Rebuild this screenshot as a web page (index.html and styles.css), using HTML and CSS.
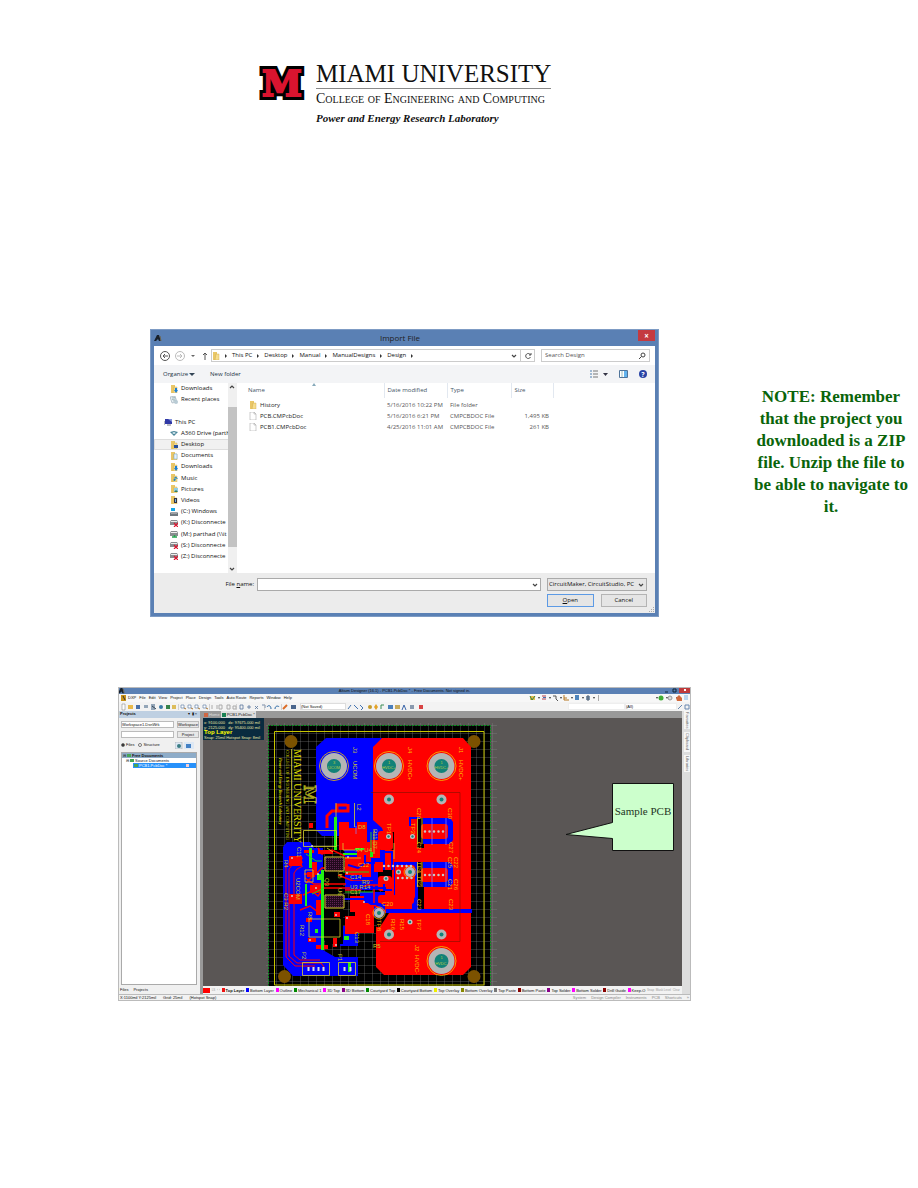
FILE: index.html
```html
<!DOCTYPE html>
<html lang="en">
<head>
<meta charset="utf-8">
<title>Power and Energy Research Laboratory</title>
<link rel="stylesheet" href="styles.css">
</head>
<body>
<svg class="defs" aria-hidden="true">
  <symbol id="folder" viewBox="0 0 8 8"><path d="M1 0h4v8H1z" fill="#e9c768"/><path d="M4 2h3v6H3z" fill="#f6dd8e" stroke="#c9a23f" stroke-width=".4"/></symbol>
  <symbol id="down" viewBox="0 0 8 8"><use href="#folder"/><path d="M5 3h2v2h1L6 8 4 5h1z" fill="#1b7fd6"/></symbol>
  <symbol id="desk" viewBox="0 0 8 8"><use href="#folder"/><path d="M4 4h4v3H4z" fill="#264f9c"/></symbol>
  <symbol id="docs" viewBox="0 0 8 8"><use href="#folder"/><path d="M4 2h3v5H4z" fill="#e5f1fb" stroke="#69a5cf" stroke-width=".5"/></symbol>
  <symbol id="music" viewBox="0 0 8 8"><use href="#folder"/><path d="M5 6V3l2 1v1" fill="none" stroke="#167fc4"/><circle cx="4.500" cy="6" r="1" fill="#167fc4"/></symbol>
  <symbol id="pics" viewBox="0 0 8 8"><use href="#folder"/><path d="M4 3h4v4H4z" fill="#91cce5"/><path d="M4 7l2-2 2 2z" fill="#397b55"/></symbol>
  <symbol id="video" viewBox="0 0 8 8"><use href="#folder"/><path d="M4 2h3v5H4z" fill="#334"/><path d="M5 3h1v3H5z" fill="#6ab1df"/></symbol>
  <symbol id="recent" viewBox="0 0 8 8"><path d="M0 1l5-1 2 6-5 1z" fill="#e4edf3" stroke="#8094a3" stroke-width=".5"/><path d="M2 2l3-.5M2 3.500L5.500 3M3 5l3-.5" stroke="#688"  stroke-width=".5"/><circle cx="6" cy="6" r="2" fill="#b9cbd5"/></symbol>
  <symbol id="pc" viewBox="0 0 8 8"><path d="M1 1h7v5H1z" fill="#3038a6"/><path d="M4 1h4v3z" fill="#8393da"/><path d="M3 7h4M0 3v4" stroke="#778"/></symbol>
  <symbol id="cloud" viewBox="0 0 8 8"><path d="M0 3l4-1 4 1-4 4z" fill="#4a8599"/><path d="M2 4l2-1 2 1-2 1z" fill="#e4f3f8"/></symbol>
  <symbol id="cdrive" viewBox="0 0 8 8"><path d="M1 0h2v2H1zm2 0h2v2H3zM1 2h4v1H1z" fill="#13a7e6"/><path d="M0 5l1-1h6l1 1v3H0z" fill="#707980"/><path d="M1 5h6" stroke="#ccc"/></symbol>
  <symbol id="drive" viewBox="0 0 8 8"><path d="M0 3l1-2h6l1 2v3H0z" fill="#898d90"/><path d="M1 2h6v1H1z" fill="#eee"/></symbol>
  <symbol id="lost" viewBox="0 0 8 8"><use href="#drive"/><path d="M4 4l4 4M8 4L4 8" stroke="#dc1730" stroke-width="1.200"/></symbol>
  <symbol id="net" viewBox="0 0 8 8"><use href="#drive"/><path d="M2 7h5M4.500 5v2" stroke="#24a44e" stroke-width="1.500"/></symbol>
  <symbol id="file" viewBox="0 0 8 8"><path d="M1 0h4l2 2v6H1z" fill="#fff" stroke="#999" stroke-width=".5"/><path d="M5 0v2h2" fill="none" stroke="#999" stroke-width=".5"/></symbol>
  <symbol id="chev" viewBox="0 0 8 8"><path d="M2 3l2 2 2-2" fill="none" stroke="#444" stroke-width="1.200"/></symbol>
  <symbol id="tri" viewBox="0 0 8 8"><path d="M1 3h6L4 6z" fill="#345"/></symbol>
  <symbol id="right" viewBox="0 0 8 8"><path d="M3 2l2 2-2 2z" fill="#333"/></symbol>
  <symbol id="altium" viewBox="0 0 8 8"><path d="M3 1h2l2 6H5L4 5 2 7H0z" fill="#18202b"/><path d="M6 2l1 5" stroke="#6c6550"/></symbol>
</svg>

<header class="brand">
  <svg class="mark" viewBox="0 0 46 38" role="img" aria-label="Miami M"><text x="23" y="31" text-anchor="middle" class="mark-m mark-edge">M</text><text x="23" y="31" text-anchor="middle" class="mark-m" aria-hidden="true">M</text></svg>
  <div class="brand-text">
    <h1>MIAMI UNIVERSITY</h1>
    <p class="college">College of Engineering and Computing</p>
    <p class="lab">Power and Energy Research Laboratory</p>
  </div>
</header>

<main>
<section class="import-row">
  <div class="dialog">
    <div class="titlebar"><svg class="ic"><use href="#altium"/></svg><span>Import File</span><button class="close" aria-label="Close">×</button></div>
    <div class="address">
      <svg class="nav" viewBox="0 0 52 14"><g fill="none" stroke="#555"><circle cx="6" cy="7" r="4.500"/><path d="M9 7H4m2-2L4 7l2 2"/><g stroke="#bbb"><circle cx="21" cy="7" r="4.500"/><path d="M18 7h5m-2-2l2 2-2 2"/></g><path d="M46 11V4m-2 2l2-2 2 2"/></g><path d="M32 6h4l-2 2z" fill="#666"/></svg>
      <div class="path"><svg class="ic"><use href="#folder"/></svg><svg class="sep"><use href="#right"/></svg><span>This PC</span><svg class="sep"><use href="#right"/></svg><span>Desktop</span><svg class="sep"><use href="#right"/></svg><span>Manual</span><svg class="sep"><use href="#right"/></svg><span>ManualDesigns</span><svg class="sep"><use href="#right"/></svg><span>Design</span><svg class="sep"><use href="#right"/></svg><svg class="ic end"><use href="#chev"/></svg><button class="refresh" aria-label="Refresh"><svg class="ic" viewBox="0 0 8 8"><path d="M6.500 3A2.500 2.500 0 1 0 6.500 5M7 1v2H5" fill="none" stroke="#555"/></svg></button></div>
      <div class="search"><input aria-label="Search Design" placeholder="Search Design"><svg class="ic" viewBox="0 0 8 8"><circle cx="5" cy="3" r="2" fill="none" stroke="#444"/><path d="M3.500 4.500L1 7" stroke="#444"/></svg></div>
    </div>
    <div class="tools"><button>Organize <svg class="ic"><use href="#tri"/></svg></button><button>New folder</button>
      <svg class="views" viewBox="0 0 60 12"><path d="M1 3h2M1 6h2M1 9h2" stroke="#4b7cae"/><path d="M4 3h5M4 6h5M4 9h5" stroke="#777"/><path d="M14 5h5l-2.500 3z" fill="#334"/><path d="M30.500 2.500h8v7h-8z" fill="#fff" stroke="#50749a"/><path d="M35 3h3v6h-3z" fill="#62b3ee"/><path d="M33 3v6" stroke="#9bb"/><circle cx="54" cy="6" r="4" fill="#2944a6"/><text x="54" y="9" text-anchor="middle" class="help">?</text></svg>
    </div>
    <div class="browser">
      <ul class="tree">
        <li><svg class="ic"><use href="#down"/></svg>Downloads</li><li><svg class="ic"><use href="#recent"/></svg>Recent places</li><li></li>
        <li class="root"><svg class="ic"><use href="#pc"/></svg>This PC</li>
        <li><svg class="ic"><use href="#cloud"/></svg>A360 Drive (parth</li>
        <li class="sel"><svg class="ic"><use href="#desk"/></svg>Desktop</li>
        <li><svg class="ic"><use href="#docs"/></svg>Documents</li><li><svg class="ic"><use href="#down"/></svg>Downloads</li>
        <li><svg class="ic"><use href="#music"/></svg>Music</li><li><svg class="ic"><use href="#pics"/></svg>Pictures</li><li><svg class="ic"><use href="#video"/></svg>Videos</li>
        <li><svg class="ic"><use href="#cdrive"/></svg>(C:) Windows</li><li><svg class="ic"><use href="#lost"/></svg>(K:) Disconnecte</li><li><svg class="ic"><use href="#net"/></svg>(M:) parthad (\\it</li><li><svg class="ic"><use href="#lost"/></svg>(S:) Disconnecte</li><li><svg class="ic"><use href="#lost"/></svg>(Z:) Disconnecte</li>
      </ul>
      <div class="scroll"><svg class="ic flip"><use href="#chev"/></svg><i></i><svg class="ic"><use href="#chev"/></svg></div>
      <div class="files">
      <table>
        <thead><tr><th class="c-name">Name<svg class="sort" viewBox="0 0 4 3"><path d="M0 3l2-3 2 3z" fill="#8ab"/></svg></th><th class="c-date">Date modified</th><th class="c-type">Type</th><th class="c-size">Size</th><th></th></tr></thead>
        <tbody>
          <tr><td><svg class="ic"><use href="#folder"/></svg>History</td><td>5/16/2016 10:22 PM</td><td>File folder</td><td></td><td></td></tr>
          <tr><td><svg class="ic"><use href="#file"/></svg>PCB.CMPcbDoc</td><td>5/16/2016 6:21 PM</td><td>CMPCBDOC File</td><td>1,495 KB</td><td></td></tr>
          <tr><td><svg class="ic"><use href="#file"/></svg>PCB1.CMPcbDoc</td><td>4/25/2016 11:01 AM</td><td>CMPCBDOC File</td><td>261 KB</td><td></td></tr>
        </tbody>
      </table>
      </div>
    </div>
    <div class="foot">
      <label for="fname">File <u>n</u>ame:</label>
      <div class="combo"><input id="fname"><svg class="ic"><use href="#chev"/></svg></div>
      <div class="actions">
        <div class="pick"><select aria-label="File type"><option>CircuitMaker, CircuitStudio, PC</option></select><svg class="ic"><use href="#chev"/></svg></div>
        <button class="open"><u>O</u>pen</button><button>Cancel</button>
      </div>
      <svg class="grip" viewBox="0 0 6 6"><path d="M4 0h1v1H4zM2 2h1v1H2zm2 0h1v1H4zM0 4h1v1H0zm2 0h1v1H2zm2 0h1v1H4z" fill="#aaa"/></svg>
    </div>
  </div>
  <p class="note">NOTE: Remember that the project you downloaded is a ZIP file. Unzip the file to be able to navigate to it.</p>
</section>

<section class="editor">
  <div class="ed-title"><svg class="ic"><use href="#altium"/></svg><span>Altium Designer (16.1) - PCB1.PcbDoc * - Free Documents. Not signed in.</span><svg class="winbtns" viewBox="0 0 28 7"><path d="M2 5h3M10 2h3v3h-3z" stroke="#123" fill="none"/><path d="M16 0h12v6H16z" fill="#c03a3c"/><path d="M21 2l2 2m0-2l-2 2" stroke="#fff"/></svg></div>
  <div class="menubar">
    <nav><svg class="dxp" viewBox="0 0 6 6"><path d="M0 0h5v6H0z" fill="#c89218"/><path d="M2 1l2 4" stroke="#333"/></svg><a href="#">DXP</a><a href="#">File</a><a href="#">Edit</a><a href="#">View</a><a href="#">Project</a><a href="#">Place</a><a href="#">Design</a><a href="#">Tools</a><a href="#">Auto Route</a><a href="#">Reports</a><a href="#">Window</a><a href="#">Help</a></nav>
    <svg class="strip-menu" viewBox="528 0 163 8"><path d="M530 2h5v4h-5z" fill="#e2bb4d"/><path d="M530 2l2 4 3-4" stroke="#338244" fill="none"/><path d="M542 2h4M542 5h4" stroke="#b5404a"/><path d="M543 3.500h3" stroke="#4a70b0"/><path d="M553 2h3v3l2 2" stroke="#555" fill="none"/><path d="M564 1v5h5M564 4h3" stroke="#b57620" fill="none"/><path d="M575 1h4v5h-4z" fill="#4f85bd"/><path d="M586 2h4v4h-4z" fill="#8196ae"/><path d="M588 1v6" stroke="#456"/><path d="M538 3h2l-1 2zm11 0h2l-1 2zm11 0h2l-1 2zm11 0h2l-1 2zm11 0h2l-1 2zm11 0h2l-1 2zm63 0h2l-1 2zm10 0h2l-1 2zm10 0h2l-1 2z" fill="#333"/><path d="M598.500 1v6" stroke="#aaa"/><circle cx="661" cy="4" r="2.500" fill="#40ad35"/><circle cx="670" cy="4" r="2" fill="#ddd" stroke="#999"/><path d="M676 4l3-3 3 3v3h-5z" fill="#d36a3c"/><path d="M684 1h4v5h-4z" fill="#b9d4ef"/></svg>
  </div>
  <div class="toolbar">
    <svg class="strip-a" viewBox="120 0 180 8"><path d="M122 1h3v6h-3z" fill="#fff" stroke="#777" stroke-width=".5"/><path d="M128 2h5v4h-5z" fill="#e8b94a"/><path d="M136 2h4v4h-4z" fill="#476fa8"/><path d="M144 2h4v3h-4zM151 1h4v6h-4z" fill="#94a6b8"/><path d="M152 3l4 3" stroke="#345"/><circle cx="161" cy="4" r="2" fill="#397aa8"/><path d="M166 2h4v4h-4z" fill="#36834a"/><path d="M172 2h4v4h-4z" fill="#ddbd5b"/><path d="M181 2h3v3h-3zm7 0h3v3h-3zm7 0h3v3h-3zm8 0h3v3h-3z" fill="#fff" stroke="#52739e" stroke-width=".6"/><path d="M184 5l2 1m5-1l2 1m5-1l2 1m6-1l2 1" stroke="#a77430"/><path d="M212 2v4m5-4v4m2-4h3v4h-3zm8 0h3v4h-3zm6 1h3v3h-3z" stroke="#aaa" fill="none"/><path d="M240 2h3v4h-3zm7 2h4m-2-2v4m6-3l3 3m0-3l-3 3m7-4h3v3" stroke="#58759c" fill="none" stroke-width=".8"/><path d="M267 4c1-2 4-2 4 2m4 0c0-4 4-3 4-2" stroke="#2867a4" fill="none"/><path d="M283 6l4-4" stroke="#dc6c26" stroke-width="2"/><path d="M291 2h5v4h-5z" fill="#49658c"/><path d="M178.500 1v6m31-6v6m27-6v6m28-6v6m17-6v6" stroke="#bbb" stroke-width=".6"/></svg>
    <select aria-label="Saved view"><option>(Not Saved)</option></select>
    <svg class="strip-b" viewBox="346 0 82 8"><path d="M348 6l3-4m3 0l4 4m2-4l3 3-2 2" stroke="#4373b0" fill="none"/><circle cx="370" cy="4" r="2" fill="#c59b2d"/><path d="M376 1l2 3-2 3-2-3z" fill="#e3a227"/><path d="M381 6V2h3" stroke="#3b8c55" fill="none"/><path d="M388 2h5v4h-5z" fill="#4a7ebb"/><path d="M395 2h5v4h-5z" fill="#c7a95b"/><path d="M402 7l2-5 2 5" stroke="#3b65a9" fill="none"/><path d="M410 2h4v4h-4z" fill="#8999ae"/><path d="M419 2h4v4h-4z" fill="#d84444"/></svg>
    <select class="blank" aria-label="Filter"><option></option></select><select class="blank" aria-label="Scope"><option>(All)</option></select>
    <svg class="strip-c" viewBox="0 0 14 8"><path d="M1 6l4-4m3 0h4v4H8z" stroke="#6888b0" fill="none"/></svg>
  </div>
  <div class="workspace">
    <aside class="projects">
      <div class="p-head"><b>Projects</b><span>▾ ▮ ×</span></div>
      <div class="p-form">
        <select aria-label="Workspace"><option>Workspace1.DsnWrk</option></select><button>Workspace</button>
        <input aria-label="Project"><button>Project</button>
      </div>
      <div class="p-mode"><label><input type="radio" name="m" checked>Files</label><label><input type="radio" name="m">Structure</label><svg class="p-icons" viewBox="0 0 22 7"><path d="M0 0h7v7H0z" fill="#dde8f4" stroke="#999" stroke-width=".5"/><circle cx="4" cy="4" r="2" fill="#3b7d83"/><path d="M9 0h10v7H9z" fill="#dde8f4"/><path d="M11 2h5v4h-5z" fill="#4581c4"/></svg></div>
      <ul class="p-tree"><li class="g">⊟ <i></i><b>Free Documents</b></li><li class="s">⊟ <i></i>Source Documents</li><li class="d"><i></i>PCB1.PcbDoc *<em></em></li></ul>
      <div class="p-tabs"><span>Files</span><span>Projects</span></div>
    </aside>
    <div class="stage">
      <div class="doc-tabs"><span class="home"><i></i>Home</span><span class="doc"><i></i>PCB1.PcbDoc *</span></div>
      <svg class="pcb" viewBox="203 718 479 268" preserveAspectRatio="xMinYMin slice" role="img" aria-label="Printed circuit board layout">
        <defs>
          <pattern id="grid" x="268" y="725" width="8" height="8" patternUnits="userSpaceOnUse"><path d="M0 .5h8M.5 0v8" stroke="#8a8a8a" stroke-opacity=".5" stroke-width=".6"/></pattern>
          <pattern id="mesh" width="2" height="2" patternUnits="userSpaceOnUse"><path d="M0 0h2v2H0z" fill="#220a1d"/><path d="M0 0h1v1H0z" fill="#602455"/></pattern>
          <g id="pad"><circle r="14.500" fill="none" stroke="#f5c400" stroke-width=".8"/><circle r="13" fill="#b5b5b5"/><circle r="7" fill="#128278"/></g>
          <g id="via"><circle r="5" fill="#b5b5b5"/><circle r="2" fill="#128278"/></g>
          <g id="pt"><circle r="2.500" fill="#c4c4c4"/><circle r="1.200" fill="#128278"/></g>
        </defs>
        <path d="M203 718h479v268H203z" fill="#5a5655"/>
        <path d="M266 723h231v263H266z" fill="url(#grid)"/>
        <path d="M268 725h222v262H268z" fill="#000"/><path d="M268 725h222v262H268z" fill="url(#grid)"/>
        <path d="M268.500 987V725.500H490.500V987" fill="none" stroke="#0b8b20" stroke-dasharray="2 1"/>
        <path d="M274.500 985V731.500H484V985z" fill="none" stroke="#c6c500"/>
        <g fill="#7c5200"><circle cx="291" cy="741.500" r="6.500"/><circle cx="474" cy="741.500" r="6.500"/><circle cx="284.500" cy="976.500" r="6.500"/><circle cx="474" cy="976.500" r="6.500"/></g>
        <g fill="#00f">
          <path d="M316 747l10-9h60v98h-64l-6-6z"/>
          <path d="M283 847l4-5h23l4 6h9v102l12 7h23v19h-65l-10-11z"/>
          <path d="M340 836h60v48h-55v-30z"/>
          <path d="M345 868h45v22h-45zM340 926h18v20h-18zM360 892h30v24h-30z"/>
        </g>
        <path d="M373 747l9-9h81l8 9v220l-8 8h-79l-8-8v-40l9-14v-77l-3-8-9-8z" fill="#f00"/>
        <g fill="#000"><path d="M417 818h7v30h-7zM417 862h7v50h-7zM380 832h14v18h-14zM378 870h14v16h-14z"/><path d="M323 860h20v84h-17l-3-8z"/><path d="M376 927l9-14h4l-9 14z"/></g>
        <g fill="#00f"><path d="M423 818h27l3 4v18l-3 4h-27zM423 862h27l3 4v17l-3 4h-27z"/><path d="M386 909h86v4h-86zM394 862h24v50h-6v-14h-18z"/></g>
        <g fill="#f00"><rect x="421" y="824" width="27" height="15" rx="3"/><rect x="421" y="868" width="27" height="14" rx="3"/><rect x="378" y="831" width="15" height="19" rx="3"/><rect x="395" y="865" width="20" height="34" rx="3"/><rect x="378" y="876" width="14" height="15" rx="3"/><rect x="378" y="895" width="36" height="9" rx="3"/>
          <path d="M339 822h10v6h8v-6h10v28h-28zM357 842h22v16h-22zM345 857h20v18h-20zM362 853h9v24h-9zM345 916h12v18h-12zM355 903h19v30h-19zM350 896h14v16h-14zM370 840h10v18h-10zM289 856h13v10h-13zM289 894h13v10h-13zM310 885h13v8h-13zM308 938h8v4h-8zM316 945h12v4h-12zM333 938h4v9h-4zM309 823h4v5h-4zM304 850h10v3h-10zM318 850h15v4h-15zM312 862h5v13h-5zM316 900h5v15h-5zM307 872h8v5h-8zM334 912h6v5h-6zM374 862h9v10h-9zM306 918h6v4h-6z"/>
        </g>
        <g fill="none" stroke="#f00"><path d="M327 828v-12l5-5h16v-7M337 811v-6h10" stroke-width="3"/><path d="M303 858l-12 3-5 6v90l9 9h20M303 862l-10 2-4 5v87l8 7h24l3 4M303 866l-6 3-3 4v82l6 5h20"/><path d="M304 874h12l6-6h24M305 878l9 6h32M303 895l9-4 6 5 6-8h30M300 910l10-4 8 6h5M345 890h14l8-5h14M318 848l4 6 10-4 13 6M306 883l8-8M338 875l15 6h20M374 885v20l10 6" stroke-width="1.500"/></g>
        <g fill="none" stroke="#00f"><path d="M344 899h20l7 5h10M347 882h28M350 888h36M365 855v8h10M348 865l10 3 6-4M380 852h12v18M410 826v-8h10M392 890h-8v-6" stroke-width="2"/><path d="M356 826v8M432 818v27M446 818v27M432 862v25M446 862v25" stroke="#88f" stroke-width=".7"/></g>
        <path d="M325 857h19v14h-19zM325 895h19v13h-19z" fill="url(#mesh)" stroke="#d8cc32"/>
        <g fill="#22ef16"><path d="M334 817h3v33h-3zM321 870h3v80h-3zM309 848h3v20h-3zM305 884h2v22h-2zM348 962h3v10h-3zM315 929h3v4h-3zM344 936h5v4h-5zM317 874h4v6h-4zM343 853h14v2h-14zM355 848h9v2h-9zM370 852h3v5h-3z"/><path d="M306 854l10 7h6M324 888l-12 6M343 872h26M345 892h28M371 832v24" fill="none" stroke="#22cf16"/></g>
        <g fill="none" stroke="#d9d22f" stroke-width=".8"><path d="M303.500 830.500h33v16h-33zM309 919h31v18h-31zM302.500 962.500h27v13h-27zM338.500 962.500h17v13h-17z"/><path d="M291.500 749v89M354.500 803v24M336 803v14M417.500 818v26M422 818v26M417.500 862v25M422 862v25M394 843v16M343 843v7h12M327 848l6 4M345 858h16M374 830v24M305 870h8v12h-8z"/></g>
        <path d="M371 792.500h89v149h-80" fill="none" stroke="#801000" stroke-width=".6"/>
        <use href="#pad" x="334" y="766"/><use href="#pad" x="389" y="766"/><use href="#pad" x="441.500" y="766"/><use href="#pad" x="441.500" y="961"/>
        <use href="#via" x="389" y="799.500"/><use href="#via" x="441.500" y="799.500"/><use href="#via" x="389" y="934.500"/><use href="#via" x="441.500" y="934.500"/><use href="#via" x="379" y="913"/><use href="#via" x="410" y="872"/>
        <use href="#pt" x="388.500" y="836.500"/><use href="#pt" x="412.500" y="836.500"/><use href="#pt" x="398.500" y="872"/><use href="#pt" x="386" y="878.500"/><use href="#pt" x="410" y="922"/>
        <g fill="none" stroke="#f5b400" stroke-width=".8"><circle cx="379" cy="913" r="6"/><circle cx="410" cy="872" r="6"/></g>
        <g fill="none" stroke="#c8c8c8" stroke-width="2.500" stroke-linecap="round" stroke-dasharray="0 4.500"><path d="M425 831.500h20M425 875h20M384 866h30M398 878h14"/></g>
        <g fill="none" stroke="#ddd" stroke-width="2"><path d="M308.500 967v4M313.500 967v4M318.500 967v4M323.500 967v4M344.500 967v4M350.500 967v4"/></g>
        <g fill="#ccc"><circle cx="292" cy="858" r="1"/><circle cx="292" cy="896" r="1"/><circle cx="318" cy="874" r="1"/><circle cx="347" cy="873" r="1"/><circle cx="348" cy="857" r="1"/><circle cx="364" cy="902" r="1"/><circle cx="347" cy="918" r="1"/><circle cx="336" cy="915" r="1"/><circle cx="310" cy="940" r="1"/><circle cx="336" cy="945" r="1"/><circle cx="312" cy="846" r="1"/><circle cx="316" cy="888" r="1"/></g>
        <g class="silk">
          <text class="m1" transform="translate(294 749) rotate(90)">MIAMI UNIVERSITY</text><text class="m2" transform="translate(286 750) rotate(90)">College of Engineering and Computing</text><text class="m3" transform="translate(279 758) rotate(90)">Power and Energy Research Laboratory</text><text class="m4" transform="translate(304 785) rotate(90)">M</text>
          <text transform="translate(353 747) rotate(90)">J3</text><text transform="translate(353 761) rotate(90)">UCOM</text><text transform="translate(357 804) rotate(90)">L2</text><text x="358" y="829">D8</text>
          <g class="orange"><text transform="translate(408 747) rotate(90)">J4</text><text transform="translate(408 760) rotate(90)">HVDC+</text><text transform="translate(459 747) rotate(90)">J1</text><text transform="translate(459 760) rotate(90)">HVDC+</text><text transform="translate(415 945) rotate(90)">J2</text><text transform="translate(415 955) rotate(90)">HVDC-</text>
          <text transform="translate(417 808) rotate(90)">C29</text><text transform="translate(448 808) rotate(90)">C30</text><text transform="translate(417 842) rotate(90)">C24</text><text transform="translate(449 842) rotate(90)">C27</text><text transform="translate(454 857) rotate(90)">C22</text><text transform="translate(448 857) rotate(90)">C25</text><text transform="translate(448 879) rotate(90)">C21</text><text transform="translate(454 879) rotate(90)">C26</text><text transform="translate(417 899) rotate(90)">C23</text><text transform="translate(449 899) rotate(90)">C23</text><text transform="translate(387 823) rotate(90)">TP1</text><text transform="translate(411 823) rotate(90)">TP2</text><text transform="translate(391 919) rotate(90)">R16</text><text transform="translate(400 919) rotate(90)">R15</text><text transform="translate(417 919) rotate(90)">TP7</text><text x="382" y="906">C20</text><text transform="translate(377 920) rotate(90)">TP8</text><text transform="translate(366 914) rotate(90)">C18</text><text transform="translate(417 862) rotate(90)">TP4</text><text transform="translate(417 876) rotate(90)">TP3</text><text x="358" y="867">C12</text></g>
          <text x="350" y="879">C14</text><text x="362" y="884">R9</text><text x="350" y="889">U3 R14</text><text x="350" y="894">C17</text><text transform="translate(296 878) rotate(90)">U2COM</text><text transform="translate(284 893) rotate(90)">C3 R2</text><text transform="translate(284 860) rotate(90)">R4</text><text transform="translate(297 847) rotate(90)">C11</text><text transform="translate(325 878) rotate(90)">Q3</text><text transform="translate(338 888) rotate(90)">U6</text><text transform="translate(338 871) rotate(90)">U5</text><text transform="translate(308 912) rotate(90)">R8</text><text transform="translate(300 925) rotate(90)">R12</text><text transform="translate(302 952) rotate(90)">P2</text><text transform="translate(338 954) rotate(90)">P1</text><text transform="translate(355 932) rotate(90)">C13</text><text x="355" y="852">R4 U4</text><text x="373" y="948">R5</text><text transform="translate(373 829) rotate(90)">R11 D7</text>
        </g>
        <g class="padtext" text-anchor="middle"><text x="334" y="764">3</text><text x="334" y="769">UCOM</text><text x="389" y="764">1</text><text x="389" y="769">HVDC+</text><text x="441.500" y="764">1</text><text x="441.500" y="769">HVDC+</text><text x="441.500" y="959">1</text><text x="441.500" y="965">HVDC-</text></g>
        <path d="M203 718h61v22h-61z" fill="#092b3f"/>
        <g class="hud"><text x="204" y="724">x: 9100.000   dx: 97675.000 mil</text><text x="204" y="729">y: 2125.000   dy: 95400.000 mil</text><text class="top" x="204" y="734">Top Layer</text><text class="snap" x="204" y="739">Snap: 25mil Hotspot Snap: 8mil</text></g>
        <path d="M612.500 783.500h61v67h-61v-12L566 834.500l46.500-12z" fill="#cfc" stroke="#111"/>
        <text class="callout" x="643" y="815" text-anchor="middle">Sample PCB</text>
      </svg>
      <div class="layers"><i class="now"></i><span class="opt">LS</span><span class="opt">‹ ›</span><span class="on k-red">Top Layer</span><span class="k-blue">Bottom Layer</span><span class="k-pink">Outline</span><span class="k-green">Mechanical 1</span><span class="k-pink">3D Top</span><span class="k-plum">3D Bottom</span><span class="k-green">Courtyard Top</span><span class="k-black">Courtyard Bottom</span><span class="k-yellow">Top Overlay</span><span class="k-olive">Bottom Overlay</span><span class="k-gray">Top Paste</span><span class="k-maroon">Bottom Paste</span><span class="k-plum">Top Solder</span><span class="k-pink">Bottom Solder</span><span class="k-maroon">Drill Guide</span><span class="k-pink">Keep-O</span><span class="opt">Snap</span><span class="opt">Mask Level</span><span class="opt">Clear</span></div>
    </div>
    <div class="rail"><span>Favorites</span><span>Clipboard</span><span>Libraries</span></div>
  </div>
  <div class="status"><span>X:1100mil Y:2125mil</span><span>Grid: 25mil</span><span>(Hotspot Snap)</span><div><span>System</span><span>Design Compiler</span><span>Instruments</span><span>PCB</span><span>Shortcuts</span><span>»</span></div></div>
</section>
</main>
</body>
</html>
```
FILE: styles.css
```css
* { box-sizing: border-box; }
body { margin: 0; background: #fff; color: #111; font-family: "Open Sans", sans-serif; }
.defs { display: none; }
button, input, select { font: inherit; color: inherit; margin: 0; padding: 0; border-radius: 0; appearance: none; }
button { display: flex; align-items: center; justify-content: center; border: 0; background: none; }
ul { list-style: none; margin: 0; padding: 0; }
.ic { width: 8px; height: 8px; flex: none; }

.brand { display: flex; gap: 11px; padding: 60px 0 0 259px; font-family: "Liberation Serif", serif; }
.mark { width: 46px; height: 38px; margin-top: 5px; overflow: visible; }
.mark-m { font: bold 36px "DejaVu Serif", serif; fill: #d9142f; stroke: #d9142f; stroke-width: 2px; }
.mark-edge { stroke: #000; stroke-width: 8px; }
.brand h1 { margin: 0; font-size: 25px; font-weight: 400; line-height: 28px; border-bottom: 1px solid #888; }
.brand p { margin: 0; white-space: nowrap; }
.college { font-size: 14px; line-height: 20px; font-variant: small-caps; }
.lab { font-size: 11px; line-height: 19px; font-weight: bold; font-style: italic; }

.import-row { display: grid; grid-template-columns: minmax(0, 1fr) 156px; gap: 94px; padding: 201px 9px 0 150px; }
.dialog { display: flex; flex-direction: column; font-size: 6px; line-height: 11px; background: #fff; border: solid #5a80b4; border-width: 0 4px 4px; outline: 1px solid #7d9bc4; outline-offset: -1px; white-space: nowrap; }
.titlebar { display: flex; align-items: center; height: 17px; background: #5a80b4; font-size: 8px; color: #222; }
.titlebar span { flex: 1; text-align: center; }
.close { width: 17px; height: 11px; margin-bottom: 5px; background: #c43a40; color: #fff; font-weight: bold; }
.address { display: flex; align-items: center; height: 19px; padding: 0 5px; gap: 6px; }
.nav { width: 52px; height: 14px; flex: none; margin-right: -6px; }
.path { display: flex; flex: 1; align-items: center; height: 13px; border: 1px solid #ccc; }
.sep { width: 8px; height: 8px; margin: 0 2px; flex: none; }
.end { margin-left: auto; }
.refresh { width: 14px; height: 11px; margin-left: 2px; border-left: 1px solid #ccc; }
.search { display: flex; align-items: center; width: 109px; height: 13px; padding: 0 3px; border: 1px solid #ccc; }
.search input { min-width: 0; flex: 1; border: 0; background: none; }
.search input::placeholder { color: #555; }
.tools { display: flex; align-items: center; gap: 14px; height: 18px; padding: 0 6px 0 9px; background: #f3f4f6; color: #234; }
.views { width: 60px; height: 12px; margin-left: auto; }
.help { font: bold 7px "Open Sans", sans-serif; fill: #fff; }
.browser { display: grid; grid-template-columns: 74px 9px minmax(0, 1fr); height: 190px; }
.tree { display: grid; grid-auto-rows: 1fr; padding-bottom: 11px; overflow: hidden; }
.tree li { display: flex; align-items: center; gap: 3px; padding-left: 16px; line-height: 9px; min-height: 0; }
.tree .root { padding-left: 10px; }
.tree .sel { background: #f1f1f1; outline: 1px solid #ddd; outline-offset: -1px; }
.scroll { display: flex; flex-direction: column; background: #f0f0f0; }
.scroll i { flex: 1; margin: 16px 0 18px; background: #c3c3c3; }
.flip { transform: rotate(180deg); }
.files { padding-left: 9px; }
table { width: 100%; table-layout: fixed; border-collapse: collapse; }
th { height: 15px; padding: 0 0 0 3px; text-align: left; font-weight: 400; color: #456; border-left: 1px solid #e2e8f0; }
.c-name { position: relative; width: 138px; padding-left: 2px; border: 0; }
.c-date { width: 63px; } .c-type { width: 64px; } .c-size { width: 42px; }
.sort { position: absolute; left: 66px; top: 0; width: 4px; height: 3px; }
td { height: 11px; padding: 0 0 0 3px; line-height: 11px; color: #555; }
td:first-child { color: #222; }
td .ic { margin-right: 3px; vertical-align: middle; }
td:nth-child(4) { text-align: right; padding-right: 4px; }
tbody::before { content: ""; display: block; height: 2px; }
.foot { display: flex; align-items: flex-start; gap: 6px; height: 40px; padding: 5px 8px 0 69px; background: #ececec; position: relative; }
.foot label { width: 31px; line-height: 13px; text-align: right; margin-right: -3px; }
.combo, .pick { display: flex; align-items: center; height: 13px; border: 1px solid #aaa; background: #fff; padding-right: 1px; }
.combo { flex: 1; }
.combo input { flex: 1; min-width: 0; border: 0; background: none; }
.actions { display: grid; grid-template-columns: 1fr 1fr; gap: 3px 7px; width: 100px; }
.actions button { height: 13px; border: 1px solid #b4b4b4; background: #e5e5e5; }
.actions .open { border-color: #5c9ae5; }
.pick { grid-column: 1 / -1; background: #e5e5e5; }
.pick select { flex: 1; min-width: 0; border: 0; background: none; padding-left: 1px; }
.grip { position: absolute; right: 0; bottom: 0; width: 6px; height: 6px; }
.note { margin: 57px 0 0; font: bold 17px/22px "Liberation Serif", serif; color: #0a640a; text-align: center; }

.editor { margin: 70px 227px 0 118px; font: 4px/6px "Liberation Sans", sans-serif; background: #f2f2f2; outline: 1px solid #bbb; outline-offset: -1px; white-space: nowrap; }
.ed-title { display: flex; align-items: center; height: 7px; background: #5a80b4; }
.ed-title .ic { width: 7px; height: 7px; margin-right: 21px; }
.ed-title span { flex: 1; text-align: center; }
.winbtns { width: 28px; height: 7px; }
.menubar { display: flex; justify-content: space-between; height: 8px; background: #f7f7f7; }
.menubar nav { display: flex; align-items: center; gap: 3px; padding-left: 3px; }
.menubar a { color: #111; text-decoration: none; }
.dxp { width: 6px; height: 6px; margin-right: -2px; }
.strip-menu { width: 163px; height: 8px; }
.toolbar { display: flex; align-items: center; height: 9px; padding-left: 2px; background: #f3f3f3; }
.toolbar select { width: 46px; height: 7px; border: 1px solid #ddd; background: #fff; }
.toolbar .blank { flex: 1; width: auto; border-color: #eee; }
.toolbar .blank:nth-of-type(2) { margin-left: 140px; }
.toolbar .blank:last-of-type { flex: none; width: 52px; }
.strip-a { width: 180px; height: 8px; } .strip-b { width: 82px; height: 8px; } .strip-c { width: 14px; height: 8px; }
.workspace { display: grid; grid-template-columns: 85px minmax(0, 1fr) 9px; height: 283px; }
.projects { display: flex; flex-direction: column; border-right: 3px solid #999; background: #f0f0f0; }
.p-head { display: flex; justify-content: space-between; height: 7px; padding: 0 3px 0 2px; background: #bfd0e2; }
.p-form { display: grid; grid-template-columns: 53px 22px; gap: 3px; padding: 3px 1px 2px 3px; }
.p-form > * { height: 7px; min-width: 0; border: 1px solid #bbb; background: #fff; }
.p-form button { background: #e8e8e8; }
.p-mode { display: flex; align-items: center; gap: 4px; height: 10px; padding: 0 3px; }
.p-mode label { display: flex; align-items: center; gap: 1px; }
.p-mode input { width: 4px; height: 4px; border: 1px solid #777; border-radius: 50%; background: #fff; }
.p-mode input:checked { background: #222; }
.p-icons { width: 22px; height: 7px; margin-left: auto; }
.p-tree { flex: 1; margin: 2px 3px 0; border: 1px solid #aaa; background: #fff; }
.p-tree li { display: flex; align-items: center; height: 5px; line-height: 5px; gap: 1px; }
.p-tree i { width: 4px; height: 3px; background: #48a557; }
.p-tree .g { background: #8eacc8; padding-left: 1px; } .p-tree .s { padding-left: 4px; } .p-tree .d { margin-left: 11px; padding-left: 1px; background: #2791fa; color: #fff; }
.p-tree em { width: 3px; height: 3px; margin-left: auto; margin-right: 7px; background: #f6cfd2; }
.p-tabs { display: flex; gap: 5px; height: 9px; padding: 2px; }
.stage { display: flex; flex-direction: column; min-width: 0; }
.doc-tabs { display: flex; height: 7px; background: #999; }
.doc-tabs span { display: flex; align-items: center; gap: 1px; padding: 0 1px; color: #ddd; }
.doc-tabs i { width: 4px; height: 4px; background: #cf6743; }
.doc-tabs .doc { background: #ddd; color: #111; } .doc-tabs .doc i { background: #198154; }
.pcb { flex: 1; width: 100%; min-height: 0; display: block; }
.silk text { font: 6px "Liberation Sans", sans-serif; fill: #cac929; }
.silk .orange text { fill: #ffb900; }
.silk .m1 { font: 10px "Liberation Serif", serif; fill: #e2e000; }
.silk .m2 { font: 5px "Liberation Serif", serif; font-variant: small-caps; fill: #e2e000; }
.silk .m3 { font: italic bold 4px "Liberation Serif", serif; fill: #e2e000; }
.silk .m4 { font: bold 17px "DejaVu Serif", serif; fill: none; stroke: #aaa91c; }
.padtext text { font: 4px "Liberation Sans", sans-serif; fill: #b9c943; }
.hud text { font: 4px "Liberation Sans", sans-serif; fill: #eee6a6; white-space: pre; }
.hud .top { font-size: 6px; font-weight: bold; fill: #ff0; }
.callout { font: 11px "Liberation Serif", serif; fill: #243524; }
.layers { display: flex; align-items: center; justify-content: space-between; height: 8px; background: #f2f2f2; padding-right: 2px; }
.layers span { display: flex; align-items: center; line-height: 5px; }
.layers [class*="k-"]::before { content: ""; width: 3px; height: 4px; margin-right: 1px; background: currentColor; }
.now { width: 7px; height: 5px; background: #f00; }
.layers .on { font-weight: bold; }
.k-red::before { color: #e11; } .k-blue::before { color: #00f; } .k-pink::before { color: #f0f; } .k-green::before { color: #080; } .k-plum::before { color: #808; } .k-black::before { color: #000; } .k-yellow::before { color: #ee0; } .k-olive::before { color: #880; } .k-gray::before { color: #777; } .k-maroon::before { color: #800; }
.layers .opt { font-size: 3px; color: #999; }
.rail { display: flex; flex-direction: column; gap: 3px; align-items: center; background: #ddd; }
.rail span { writing-mode: vertical-rl; background: #f6f6f6; color: #666; width: 6px; padding: 1px 0; line-height: 6px; }
.status { display: flex; gap: 7px; align-items: center; height: 7px; padding: 0 2px; border-top: 1px solid #bbb; }
.status div { display: flex; gap: 5px; margin-left: auto; color: #888; }
```
